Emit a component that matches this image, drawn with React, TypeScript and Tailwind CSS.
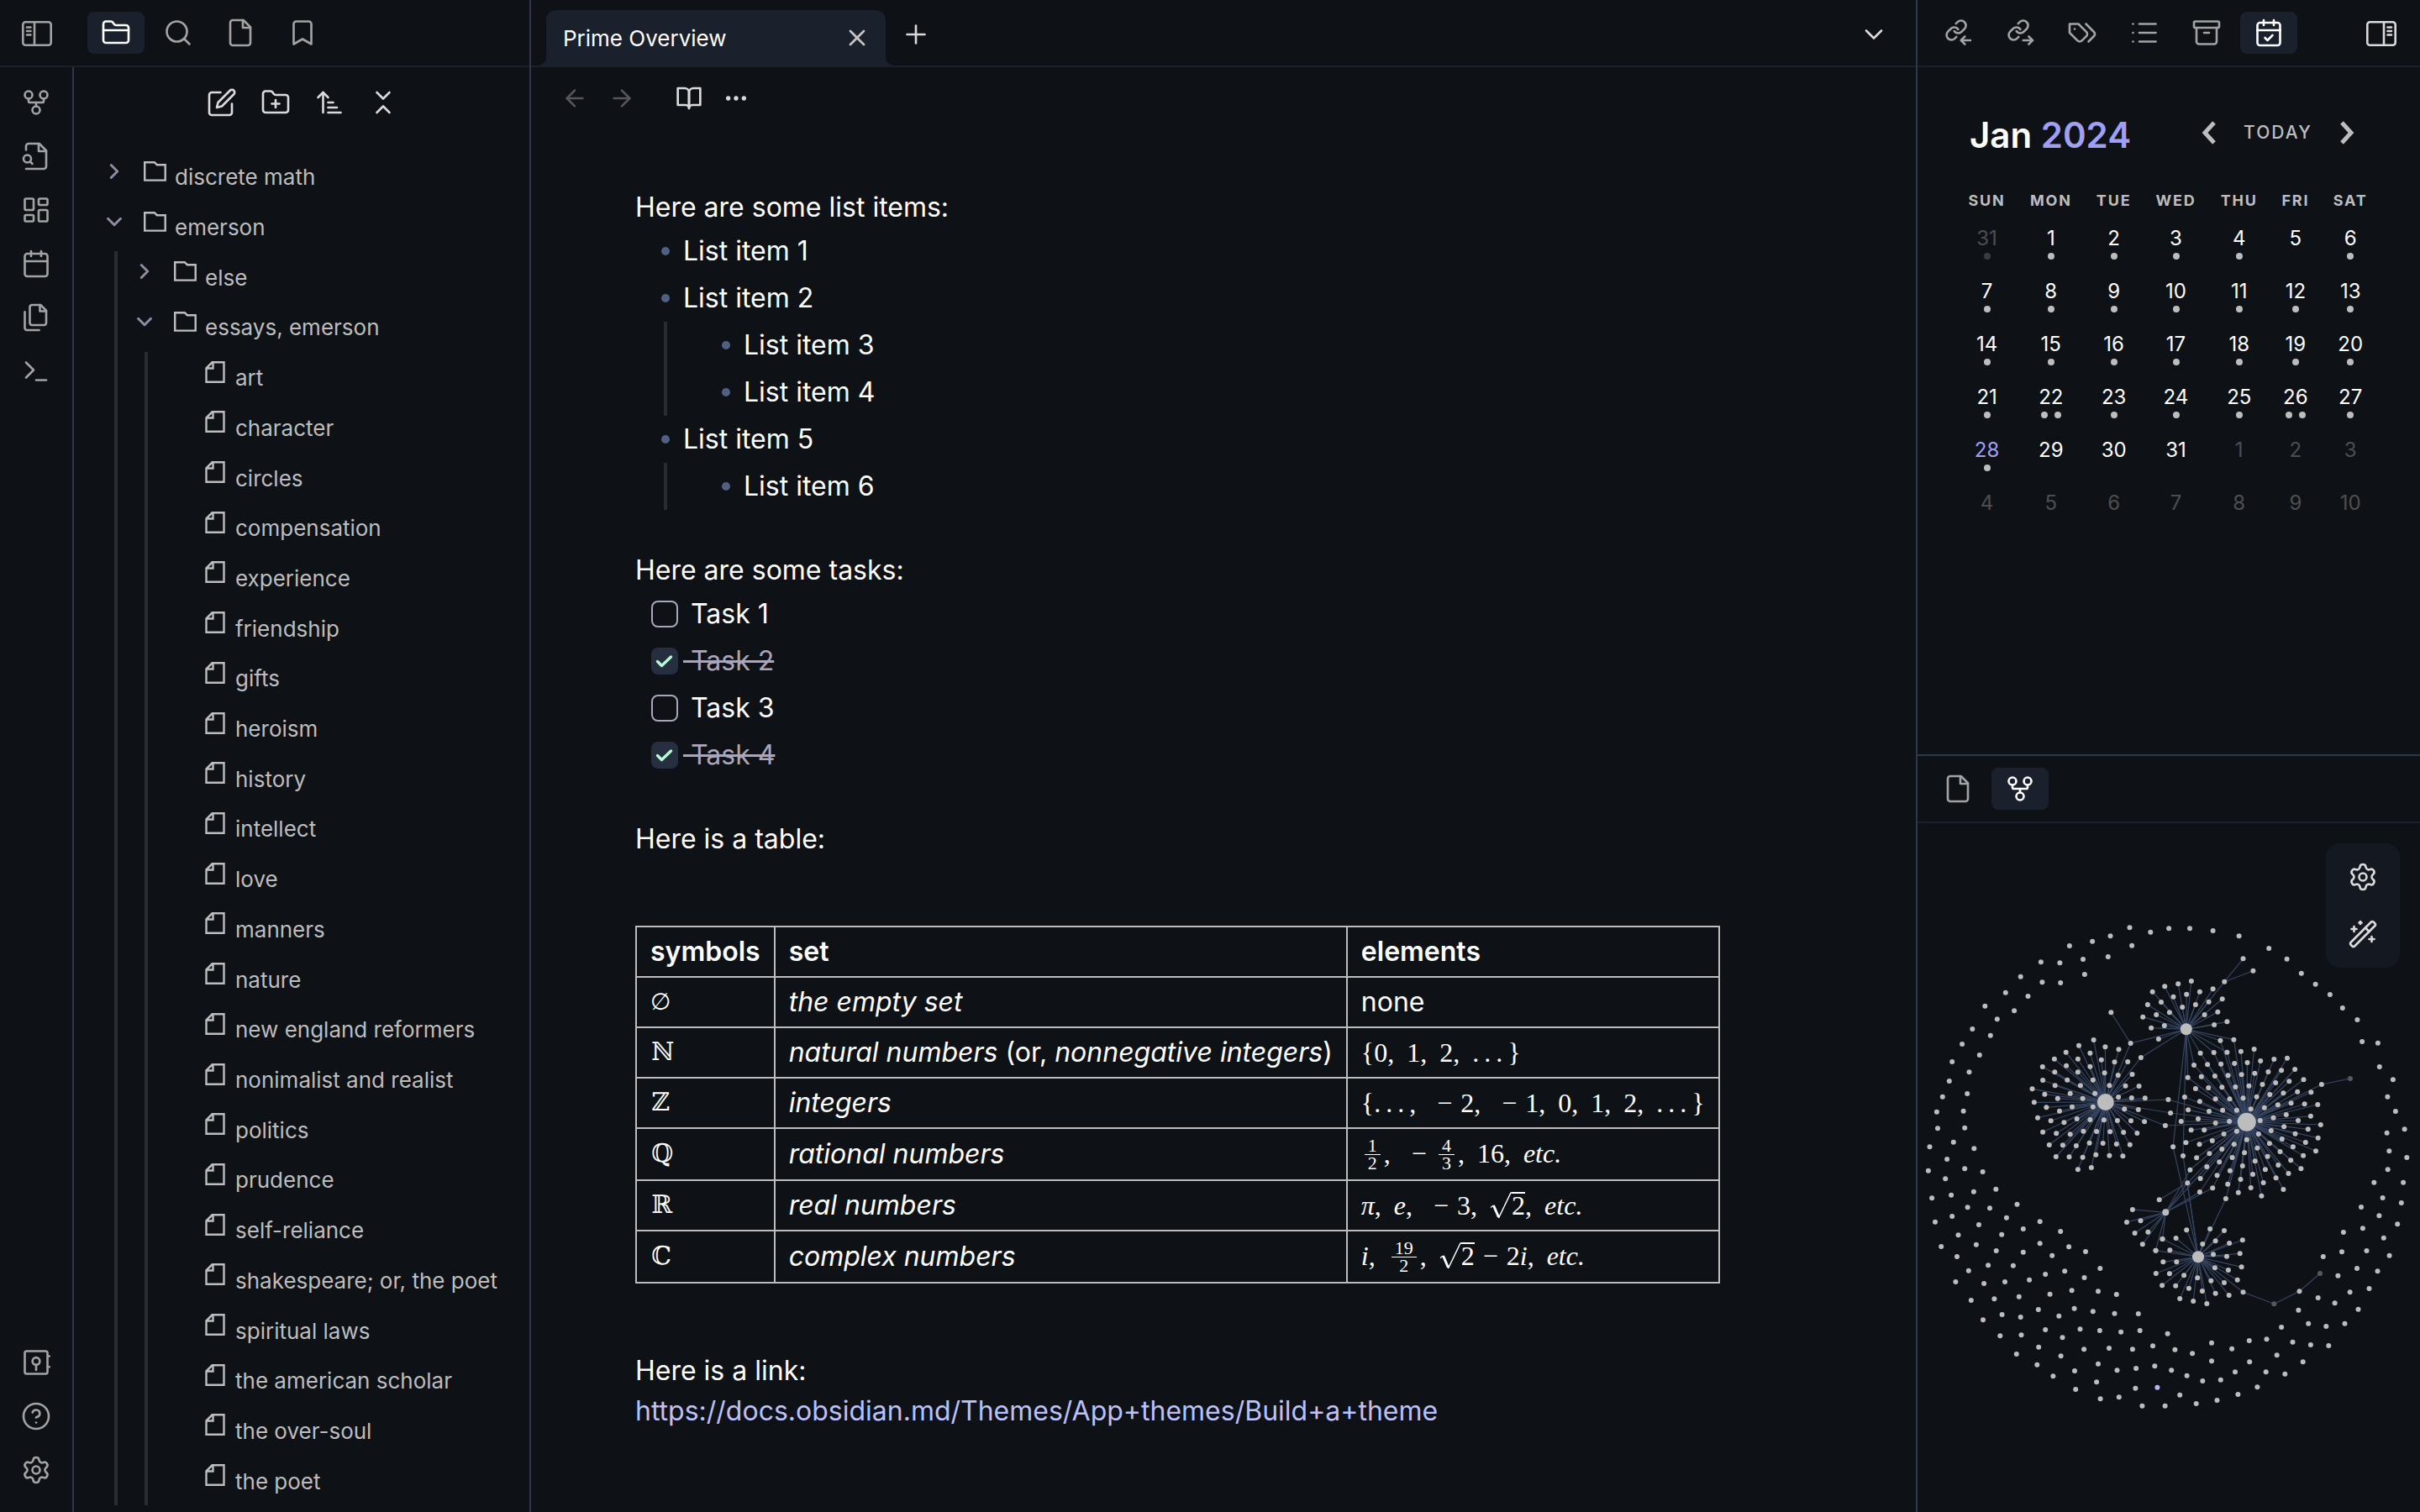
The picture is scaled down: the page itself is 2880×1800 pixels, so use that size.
import React from "react";
import {
  Search,
  Bookmark,
  GitFork,
  LayoutDashboard,
  Calendar,
  CircleHelp,
  Settings,
  FolderPlus,
  ArrowUpNarrowWide,
  ChevronsDownUp,
  ChevronRight,
  ChevronDown,
  X,
  Plus,
  ArrowLeft,
  ArrowRight,
  Ellipsis,
  List,
  CalendarCheck,
  WandSparkles,
} from "lucide-react";

/* ---------- icons ---------- */

function Glyph({ children, className = "size-9", strokeWidth = 1.75 }: { children: React.ReactNode; className?: string; strokeWidth?: number }) {
  return (
    <svg
      viewBox="0 0 24 24"
      fill="none"
      stroke="currentColor"
      strokeWidth={strokeWidth}
      strokeLinecap="round"
      strokeLinejoin="round"
      className={className}
      aria-hidden="true"
    >
      {children}
    </svg>
  );
}

const FolderIcon = () => (
  <Glyph>
    <path d="M4 20h16a2 2 0 0 0 2-2V8a2 2 0 0 0-2-2h-7.93a2 2 0 0 1-1.66-.9l-.82-1.2A2 2 0 0 0 7.93 3H4a2 2 0 0 0-2 2v13c0 1.1.9 2 2 2Z" />
    <path d="M2 10h20" />
  </Glyph>
);
const FileIcon = () => (
  <Glyph>
    <path d="M14.5 2H6a2 2 0 0 0-2 2v16a2 2 0 0 0 2 2h12a2 2 0 0 0 2-2V7.5L14.5 2z" />
    <path d="M14 2v6h6" />
  </Glyph>
);
const FileSearchIcon = () => (
  <Glyph>
    <path d="M4 22h14a2 2 0 0 0 2-2V7.5L14.5 2H6a2 2 0 0 0-2 2v3" />
    <path d="M14 2v6h6" />
    <circle cx="5" cy="14" r="3" />
    <path d="m9 18-1.5-1.5" />
  </Glyph>
);
const FilesIcon = () => (
  <Glyph>
    <path d="M15.5 2H8.6c-.4 0-.8.2-1.1.5-.3.3-.5.7-.5 1.1v12.8c0 .4.2.8.5 1.1.3.3.7.5 1.1.5h9.8c.4 0 .8-.2 1.1-.5.3-.3.5-.7.5-1.1V6.5L15.5 2z" />
    <path d="M3 7.6v12.8c0 .4.2.8.5 1.1.3.3.7.5 1.1.5h9.8" />
    <path d="M15 2v5h5" />
  </Glyph>
);
const TerminalIcon = () => (
  <Glyph>
    <path d="m4 17 6-6-6-6" />
    <path d="M12 19h8" />
  </Glyph>
);
const VaultIcon = () => (
  <Glyph>
    <rect x="3" y="3" width="18" height="18" rx="1.5" />
    <circle cx="12" cy="11" r="2.9" />
    <path d="M12 14v4M21.6 7h.9M21.6 15.5h.9" />
  </Glyph>
);
const EditIcon = () => (
  <Glyph>
    <path d="M11 4H4a2 2 0 0 0-2 2v14a2 2 0 0 0 2 2h14a2 2 0 0 0 2-2v-7" />
    <path d="M18.5 2.5a2.12 2.12 0 0 1 3 3L12 15l-4 1 1-4Z" />
  </Glyph>
);
const BookIcon = () => (
  <Glyph className="size-8" strokeWidth={2}>
    <path d="M2 3h6a4 4 0 0 1 4 4v14a3 3 0 0 0-3-3H2z" />
    <path d="M22 3h-6a4 4 0 0 0-4 4v14a3 3 0 0 1 3-3h7z" />
  </Glyph>
);
const TagsIcon = () => (
  <Glyph>
    <path d="M9 5H2v7l6.29 6.29c.94.94 2.48.94 3.42 0l3.58-3.58c.94-.94.94-2.48 0-3.42L9 5Z" />
    <path d="M6 9.01V9" />
    <path d="m15 5 6.3 6.3a2.4 2.4 0 0 1 0 3.4L17 19" />
  </Glyph>
);
const ArchiveIcon = () => (
  <Glyph>
    <rect x="2" y="3" width="20" height="5" rx="1" />
    <path d="M4 8v11a2 2 0 0 0 2 2h12a2 2 0 0 0 2-2V8" />
    <path d="M10 12h4" />
  </Glyph>
);
const LinkIcon = ({ incoming = false }: { incoming?: boolean }) => (
  <Glyph>
    <g transform="translate(1.46 0.76) scale(0.77)" strokeWidth="2.27">
      <path d="M10 13a5 5 0 0 0 7.54.54l3-3a5 5 0 0 0-7.07-7.07l-1.72 1.71" />
      <path d="M14 11a5 5 0 0 0-7.54-.54l-3 3a5 5 0 0 0 7.07 7.07l1.71-1.71" />
    </g>
    {incoming ? <path d="M22 18h-7.5M17.6 14.9 14.5 18l3.1 3.1" /> : <path d="M14.5 18H22M18.9 14.9 22 18l-3.1 3.1" />}
  </Glyph>
);
const PanelIcon = ({ side }: { side: "left" | "right" }) => (
  <svg viewBox="0 0 36 30" fill="none" stroke="currentColor" strokeWidth="2.6" strokeLinecap="round" className="h-[30px] w-9" aria-hidden="true">
    <rect x="1.3" y="1.3" width="33.4" height="27.4" rx="3" />
    {side === "left" ? <path d="M15 1.5v27M6 7.5h4.5M6 12h4.5M6 16.5h4.5" /> : <path d="M21 1.5v27M25.5 7.5H30M25.5 12H30M25.5 16.5H30" />}
  </svg>
);
const TreeFolder = () => (
  <svg viewBox="0 0 28 24" fill="none" stroke="currentColor" strokeWidth="2.4" className="h-6 w-7" aria-hidden="true">
    <path d="M1.2 1.2h11.6l3 3h9.9v18.4H1.2z" />
  </svg>
);
const TreeFile = () => (
  <svg viewBox="0 0 28 26" fill="none" stroke="currentColor" strokeWidth="2.4" className="h-[26px] w-7" aria-hidden="true">
    <path d="M9.5 1.3h14v23.4h-21V8.300zM10.5 1.300v7.200h-8" />
  </svg>
);

/* ---------- shared controls ---------- */

function TabButton({ label, active = false, children }: { label: string; active?: boolean; children: React.ReactNode }) {
  return (
    <button
      type="button"
      aria-label={label}
      className={
        active
          ? "flex h-[50px] w-[68px] items-center justify-center rounded-lg bg-[#1a202c] text-white"
          : "flex h-[50px] w-[68px] items-center justify-center rounded-lg text-[#a3a3a3]"
      }
    >
      {children}
    </button>
  );
}

function IconButton({ label, className = "", children }: { label: string; className?: string; children: React.ReactNode }) {
  return (
    <button type="button" aria-label={label} className={`flex items-center justify-center ${className}`}>
      {children}
    </button>
  );
}

/* ---------- left side ---------- */

const essays = [
  "art",
  "character",
  "circles",
  "compensation",
  "experience",
  "friendship",
  "gifts",
  "heroism",
  "history",
  "intellect",
  "love",
  "manners",
  "nature",
  "new england reformers",
  "nonimalist and realist",
  "politics",
  "prudence",
  "self-reliance",
  "shakespeare; or, the poet",
  "spiritual laws",
  "the american scholar",
  "the over-soul",
  "the poet",
];

function FolderRow({ name, open = false }: { name: string; open?: boolean }) {
  return (
    <button type="button" aria-expanded={open} className="flex w-full flex-1 items-center text-left">
      <span className="mb-3 flex w-9 justify-center text-[#8f8ba0]">
        {open ? <ChevronDown className="size-[30px]" strokeWidth={2.4} /> : <ChevronRight className="size-[30px]" strokeWidth={2.4} />}
      </span>
      <span className="mb-3 ml-[17px] mr-[9px]">
        <TreeFolder />
      </span>
      <span className="pt-0.5">{name}</span>
    </button>
  );
}

const branch = "ml-[18px] flex flex-col border-l-4 border-[#2a2c31] pl-[14px]";

function FileTree() {
  return (
    <ul className="flex min-h-0 flex-1 flex-col pb-2 pl-[30px] text-[26px] text-[#bdbdbd]">
      <li className="flex flex-1">
        <FolderRow name="discrete math" />
      </li>
      <li className="flex flex-[26] flex-col">
        <FolderRow name="emerson" open />
        <ul className={`${branch} flex-[25]`}>
          <li className="flex flex-1">
            <FolderRow name="else" />
          </li>
          <li className="flex flex-[24] flex-col">
            <FolderRow name="essays, emerson" open />
            <ul className={`${branch} flex-[23]`}>
              {essays.map((name) => (
                <li key={name} className="flex flex-1">
                  <button type="button" className="flex w-full items-center whitespace-nowrap pl-[53px] text-left">
                    <span className="mb-3 mr-[9px]">
                      <TreeFile />
                    </span>
                    <span className="pt-0.5">{name}</span>
                  </button>
                </li>
              ))}
            </ul>
          </li>
        </ul>
      </li>
    </ul>
  );
}

function LeftSide() {
  return (
    <aside className="flex w-[632px] shrink-0 flex-col border-r-2 border-[#2d3748]">
      <div className="flex h-20 shrink-0 items-start gap-1.5 border-b-2 border-[#1a202c] pt-3.5">
        <IconButton label="Toggle left sidebar" className="ml-[26px] mr-9 h-[52px] text-[#a3a3a3]">
          <PanelIcon side="left" />
        </IconButton>
        <TabButton label="Files" active>
          <FolderIcon />
        </TabButton>
        <TabButton label="Search">
          <Search className="size-9" strokeWidth={1.75} />
        </TabButton>
        <TabButton label="File">
          <FileIcon />
        </TabButton>
        <TabButton label="Bookmarks">
          <Bookmark className="size-9" strokeWidth={1.75} />
        </TabButton>
      </div>
      <div className="flex min-h-0 flex-1">
        <nav aria-label="Ribbon" className="flex w-[88px] shrink-0 flex-col items-center gap-7 border-r-2 border-[#2d3748] pb-8 pt-6 text-[#a3a3a3]">
          <IconButton label="Open graph view">
            <GitFork className="size-9" strokeWidth={1.75} />
          </IconButton>
          <IconButton label="Open quick switcher">
            <FileSearchIcon />
          </IconButton>
          <IconButton label="Create new canvas">
            <LayoutDashboard className="size-9" strokeWidth={1.75} />
          </IconButton>
          <IconButton label="Open daily note">
            <Calendar className="size-9" strokeWidth={1.75} />
          </IconButton>
          <IconButton label="Insert template">
            <FilesIcon />
          </IconButton>
          <IconButton label="Open command palette">
            <TerminalIcon />
          </IconButton>
          <IconButton label="Open another vault" className="mt-auto">
            <VaultIcon />
          </IconButton>
          <IconButton label="Help">
            <CircleHelp className="size-9" strokeWidth={1.75} />
          </IconButton>
          <IconButton label="Settings">
            <Settings className="size-9" strokeWidth={1.75} />
          </IconButton>
        </nav>
        <div className="flex min-w-0 flex-1 flex-col">
          <div className="flex h-[100px] shrink-0 items-start justify-center gap-7 pl-0.5 pt-6 text-[#dadada]">
            <IconButton label="New note">
              <EditIcon />
            </IconButton>
            <IconButton label="New folder">
              <FolderPlus className="size-9" strokeWidth={1.75} />
            </IconButton>
            <IconButton label="Change sort order">
              <ArrowUpNarrowWide className="size-9" strokeWidth={1.75} />
            </IconButton>
            <IconButton label="Collapse all">
              <ChevronsDownUp className="size-9" strokeWidth={1.75} />
            </IconButton>
          </div>
          <FileTree />
        </div>
      </div>
    </aside>
  );
}

/* ---------- math ---------- */

function Maths({ children }: { children: React.ReactNode }) {
  return <span className="whitespace-nowrap font-['Liberation_Serif',serif]">{children}</span>;
}
const Comma = () => <span className="mr-[15px]">,</span>;
const Minus = () => <span className="mx-2.5">−</span>;
const Dots = () => (
  <span className="mr-1.5 inline-flex gap-1.5">
    <span>.</span>
    <span>.</span>
    <span>.</span>
  </span>
);
function Frac({ top, bottom }: { top: string; bottom: string }) {
  return (
    <span className="mx-1 mb-1 inline-flex flex-col items-center align-middle text-[22px] leading-5">
      <span className="border-b border-white px-1">{top}</span>
      <span>{bottom}</span>
    </span>
  );
}
function Root({ children }: { children: React.ReactNode }) {
  return (
    <span className="inline-block">
      <svg viewBox="0 0 26 32" fill="none" stroke="currentColor" className="inline h-8 w-[26px] align-[-5px]" role="img" aria-label="square root of">
        <path d="M1 18.5 4.5 16" strokeWidth="1.5" />
        <path d="M4.5 16 10.5 30" strokeWidth="3" />
        <path d="M10.5 31 25 1h1" strokeWidth="1.5" />
      </svg>
      <span className="inline-block border-t-2 border-white leading-7">{children}</span>
    </span>
  );
}

/* ---------- editor ---------- */

function Bullet({ children }: { children: React.ReactNode }) {
  return (
    <li className="flex items-center py-1">
      <span className="ml-[31px] mr-4 size-2.5 rounded-full bg-[#4f6083]" />
      {children}
    </li>
  );
}

function Task({ id, label, done = false }: { id: string; label: string; done?: boolean }) {
  return (
    <li className="flex items-center py-1 pl-[19px]">
      <span className="relative mr-1.5 flex size-8">
        <input
          id={id}
          type="checkbox"
          defaultChecked={done}
          className="peer size-8 appearance-none rounded-lg border-2 border-[#aba5bb] checked:border-[#262f40] checked:bg-[#262f40]"
        />
        <svg
          viewBox="0 0 32 32"
          fill="none"
          stroke="#b0fccb"
          strokeWidth="3.5"
          strokeLinecap="round"
          strokeLinejoin="round"
          className="pointer-events-none absolute inset-0 hidden size-8 peer-checked:block"
          aria-hidden="true"
        >
          <path d="M7.5 16.5 12.5 21.5 23.5 11" />
        </svg>
      </span>
      <label htmlFor={id} className={done ? "whitespace-pre text-[#aba5b8] line-through decoration-[3px]" : "whitespace-pre"}>
        {" " + label}
      </label>
    </li>
  );
}

const rows: { symbol: string; set: React.ReactNode; elements: React.ReactNode }[] = [
  { symbol: "∅", set: <em>the empty set</em>, elements: "none" },
  {
    symbol: "ℕ",
    set: (
      <>
        <em>natural numbers</em> (or, <em>nonnegative integers</em>)
      </>
    ),
    elements: (
      <Maths>
        {"{0"}<Comma />1<Comma />2<Comma /><Dots />{"}"}
      </Maths>
    ),
  },
  {
    symbol: "ℤ",
    set: <em>integers</em>,
    elements: (
      <Maths>
        {"{"}<Dots /><Comma /><Minus />2<Comma /><Minus />1<Comma />0<Comma />1<Comma />2<Comma /><Dots />{"}"}
      </Maths>
    ),
  },
  {
    symbol: "ℚ",
    set: <em>rational numbers</em>,
    elements: (
      <Maths>
        <Frac top="1" bottom="2" /><Comma /><Minus /><Frac top="4" bottom="3" /><Comma />16<Comma /><i>etc.</i>
      </Maths>
    ),
  },
  {
    symbol: "ℝ",
    set: <em>real numbers</em>,
    elements: (
      <Maths>
        <i>π</i><Comma /><i>e</i><Comma /><Minus />3<Comma /><Root>2</Root><Comma /><i>etc.</i>
      </Maths>
    ),
  },
  {
    symbol: "ℂ",
    set: <em>complex numbers</em>,
    elements: (
      <Maths>
        <i>i</i><Comma /><Frac top="19" bottom="2" /><Comma /><Root>2</Root><Minus />2<i>i</i><Comma /><i>etc.</i>
      </Maths>
    ),
  },
];

const cell = "border-2 border-[#bdbdbd] px-4 py-[5px] text-left";

function Editor() {
  return (
    <main className="flex min-w-0 flex-1 flex-col">
      <div className="flex h-20 shrink-0 items-end border-b-2 border-[#1a202c] pl-[18px]">
        <div className="relative flex h-[66px] w-[404px] items-center justify-between rounded-t-xl bg-[#1a202c] pl-5 pr-[18px]">
          <svg viewBox="0 0 10 10" className="absolute -left-2.5 bottom-0 size-2.5 fill-[#1a202c]" aria-hidden="true">
            <path d="M10 0v10H0A10 10 0 0 0 10 0z" />
          </svg>
          <svg viewBox="0 0 10 10" className="absolute -right-2.5 bottom-0 size-2.5 fill-[#1a202c]" aria-hidden="true">
            <path d="M0 0v10h10A10 10 0 0 1 0 0z" />
          </svg>
          <span className="text-[26px] text-white">Prime Overview</span>
          <IconButton label="Close tab" className="text-[#c4c4c4]">
            <X className="size-8" strokeWidth={2} />
          </IconButton>
        </div>
        <div className="flex h-[74px] flex-1 items-center justify-between pl-[18px] pr-8 text-[#dadada]">
          <IconButton label="New tab">
            <Plus className="size-9" strokeWidth={1.75} />
          </IconButton>
          <IconButton label="Tab list">
            <ChevronDown className="size-9" strokeWidth={1.75} />
          </IconButton>
        </div>
      </div>

      <div className="flex shrink-0 items-center gap-6 pl-9 pt-[21px]">
        <IconButton label="Navigate back" className="text-[#565659]">
          <ArrowLeft className="size-8" strokeWidth={2} />
        </IconButton>
        <IconButton label="Navigate forward" className="mr-6 text-[#565659]">
          <ArrowRight className="size-8" strokeWidth={2} />
        </IconButton>
        <IconButton label="Reading view" className="text-[#dadada]">
          <BookIcon />
        </IconButton>
        <IconButton label="More options" className="text-[#dadada]">
          <Ellipsis className="size-8" strokeWidth={2} />
        </IconButton>
      </div>

      <article className="min-h-0 flex-1 px-[124px] pt-[90px] text-[32px] leading-[48px] text-white">
        <p>Here are some list items:</p>
        <ul>
          <Bullet>List item 1</Bullet>
          <Bullet>List item 2</Bullet>
          <li className="ml-[34px] border-l-4 border-[#2a2c31] pl-[34px]">
            <ul>
              <Bullet>List item 3</Bullet>
              <Bullet>List item 4</Bullet>
            </ul>
          </li>
          <Bullet>List item 5</Bullet>
          <li className="ml-[34px] border-l-4 border-[#2a2c31] pl-[34px]">
            <ul>
              <Bullet>List item 6</Bullet>
            </ul>
          </li>
        </ul>
        <p className="mt-12">Here are some tasks:</p>
        <ul>
          <Task id="task-1" label="Task 1" />
          <Task id="task-2" label="Task 2" done />
          <Task id="task-3" label="Task 3" />
          <Task id="task-4" label="Task 4" done />
        </ul>
        <p className="mt-12">Here is a table:</p>
        <table className="mb-20 mt-[79px] border-collapse">
          <thead>
            <tr>
              <th className={`${cell} font-semibold`}>symbols</th>
              <th className={`${cell} font-semibold`}>set</th>
              <th className={`${cell} font-semibold`}>elements</th>
            </tr>
          </thead>
          <tbody>
            {rows.map((row) => (
              <tr key={row.symbol}>
                <td
                  className={
                    row.symbol === "∅"
                      ? `${cell} font-['DejaVu_Sans',sans-serif] text-[28px]`
                      : `${cell} font-['DejaVu_Math_TeX_Gyre','DejaVu_Serif',serif] text-[30px]`
                  }
                >
                  {row.symbol}
                </td>
                <td className={cell}>{row.set}</td>
                <td className={cell}>{row.elements}</td>
              </tr>
            ))}
          </tbody>
        </table>
        <p>Here is a link:</p>
        <p>
          <a href="https://docs.obsidian.md/Themes/App+themes/Build+a+theme" className="text-[#bcc0fb]">
            https://docs.obsidian.md/Themes/App+themes/Build+a+theme
          </a>
        </p>
      </article>
    </main>
  );
}

/* ---------- calendar ---------- */

const weekdays = ["SUN", "MON", "TUE", "WED", "THU", "FRI", "SAT"];
const weeks = [
  [31, 1, 2, 3, 4, 5, 6],
  [7, 8, 9, 10, 11, 12, 13],
  [14, 15, 16, 17, 18, 19, 20],
  [21, 22, 23, 24, 25, 26, 27],
  [28, 29, 30, 31, 1, 2, 3],
  [4, 5, 6, 7, 8, 9, 10],
];

function dotsFor(week: number, day: number) {
  if (week === 5 || (week === 4 && day !== 28) || (week === 0 && day === 5)) return 0;
  return day === 22 || day === 26 ? 2 : 1;
}

function CalendarPanel() {
  return (
    <section aria-label="Calendar" className="flex flex-1 flex-col pl-[46px] pr-12 pt-[52px]">
      <div className="flex h-14 items-center pl-4 pr-[30px]">
        <h2 className="mr-auto text-[42px] font-semibold text-white">
          Jan <span className="text-[#9f9ff5]">2024</span>
        </h2>
        <div className="mb-1 flex items-center gap-8 text-[#bdbdbd]">
          <IconButton label="Previous month">
            <svg viewBox="0 0 18 28" fill="none" stroke="currentColor" strokeWidth="5" className="h-7 w-[18px]" aria-hidden="true">
              <path d="M15 2 4 14l11 12" />
            </svg>
          </IconButton>
          <button type="button" className="text-[21px] font-medium tracking-widest">
            TODAY
          </button>
          <IconButton label="Next month">
            <svg viewBox="0 0 18 28" fill="none" stroke="currentColor" strokeWidth="5" className="h-7 w-[18px]" aria-hidden="true">
              <path d="m3 2 11 12L3 26" />
            </svg>
          </IconButton>
        </div>
      </div>
      <table className="mt-9 w-full">
        <thead>
          <tr>
            {weekdays.map((day) => (
              <th key={day} className="h-[30px] px-3 text-lg font-bold tracking-widest text-[#bdbdbd]">
                {day}
              </th>
            ))}
          </tr>
        </thead>
        <tbody>
          {weeks.map((week, w) => (
            <tr key={w}>
              {week.map((day, d) => {
                const outside = (w === 0 && day > 7) || (w >= 4 && day < 15);
                const today = w === 4 && day === 28;
                return (
                  <td key={d} className="h-[63px] p-0 align-top">
                    <button
                      type="button"
                      className={
                        outside
                          ? "flex w-full flex-col items-center pt-4 text-2xl leading-7 text-white opacity-25"
                          : today
                            ? "flex w-full flex-col items-center pt-4 text-2xl leading-7 text-[#9f9ff5]"
                            : "flex w-full flex-col items-center pt-4 text-2xl leading-7 text-white"
                      }
                    >
                      {day}
                      <span className="mt-[3px] flex gap-2">
                        {Array.from({ length: dotsFor(w, day) }, (_, i) => (
                          <span key={i} className="size-2 rounded-full bg-[#bdbdbd]" />
                        ))}
                      </span>
                    </button>
                  </td>
                );
              })}
            </tr>
          ))}
        </tbody>
      </table>
    </section>
  );
}

/* ---------- graph ---------- */

type Point = [number, number];

function pairs(list: string, dy = 0): Point[] {
  return list.split(" ").map((pair) => {
    const [x, y] = pair.split(",").map(Number);
    return [x, y + dy];
  });
}

const LOWER = 1080;

const orphans: Point[] = [
  ...pairs(
    "665,373 730,389 787,376 852,376 924,384 1005,403 605,403 549,422 478,438 672,437 598,477 520,486 525,540 448,499 389,496 450,570 393,568 326,548 279,605 349,618 306,670 215,653 253,700 232,758 176,735 144,789 198,828 113,852 166,889 104,921 160,966 83,977 148,1028 65,1031 1098,447 1154,485 1199,536 1243,575 1288,612 1327,660 1373,702 1388,780 1437,785 1442,870 1484,916 1467,977 1492,1029",
  ),
  ...pairs(
    "68,10 152,8 1465,26 1520,13 117,59 43,76 181,82 97,120 39,161 152,154 208,165 92,190 249,227 180,236 110,248 50,259 315,281 161,292 230,295 113,324 282,329 60,344 196,354 386,343 334,369 450,378 132,391 267,389 188,425 386,421 79,432 250,447 334,452 476,433 424,464 528,450 128,468 225,499 303,500 573,510 164,518 463,520 403,531 524,543 124,558 212,564 277,558 353,551 485,589 567,592 624,603 417,602 172,624 244,619 321,611 493,653 381,657 551,664 618,671 692,672 268,675 326,684 445,680 209,694 403,729 511,727 572,732 638,737 697,732 783,743 262,751 328,748 456,757 382,791 523,799 601,795 674,799 737,787 806,800 860,814 313,816 451,823 377,854 567,851 743,859 685,867 494,876 626,874 795,874 427,895 843,893 892,912 562,916 497,942 683,938 821,962 574,976 632,970 704,1001 775,1001 872,993 937,981 1002,960 1062,934 948,908 993,880 1089,880 1148,887 920,841 1038,844 1204,844 920,776 983,797 1037,768 1091,763 1123,820 1172,773 1228,783 1284,786 1137,720 1221,707 1276,717 1334,707 1190,659 1303,634 1376,656 1251,615 1350,595 1410,582 1313,536 1436,520 1372,510 1267,468 1325,451 1402,447 1473,464 1455,401 1330,381 1390,367 1498,352 1441,322 1385,291 1510,276 1452,258 1425,203 1516,203 1468,157 1472,91 1527,114",
    LOWER,
  ),
];

const north: Point = [841, 736];
const west: Point = [590, 996];
const east: Point = [1029, 1067];
const small: Point = [777, 310 + LOWER];
const south: Point = [878, 469 + LOWER];

const clusters: { hub: Point; r: number; leaves: Point[] }[] = [
  {
    hub: north,
    r: 7,
    leaves: pairs(
      "857,564 816,574 774,583 736,602 883,602 842,611 924,592 801,620 953,628 911,638 763,639 721,648 870,648 829,657 939,674 789,676 898,684 748,684 706,692 968,709 773,723 928,720 732,731 755,771 947,776 989,773 668,786 700,837 960,566",
    ),
  },
  {
    hub: west,
    r: 10,
    leaves: [
      ...pairs(
        "553,774 507,794 589,799 631,808 467,818 542,821 431,842 504,842 577,845 618,853 659,852 394,870 468,866 542,869 587,892 629,900 673,897 432,889 504,889 395,918 471,917 551,917 512,937 433,937 602,937 652,938 694,939 362,949 480,965 557,965 401,968 441,983 519,983 630,978 671,981 713,982 368,997 406,1015 486,1013 551,1013 649,1021 692,1023 447,1028 379,1052 501,1056 542,1059 585,1060 420,1063 627,1062 669,1063 711,1066 461,1069 785,987 792,1035 776,1080",
      ),
      ...pairs(
        "395,23 437,28 480,31 521,20 562,21 604,22 646,24 688,27 415,69 457,70 499,72 540,62 582,63 624,66 666,68 436,111 477,112 519,113 560,104 602,107 644,109 504,157 546,150",
        LOWER,
      ),
    ],
  },
  {
    hub: east,
    r: 11,
    leaves: [
      ...pairs(
        "885,821 927,819 968,818 1011,815 1052,807 1155,839 1114,843 1072,849 1031,855 991,858 949,860 907,862 865,864 1179,879 1137,883 1096,888 1054,893 1013,898 971,901 930,903 888,905 846,908 1206,916 1161,922 1119,927 1078,933 1036,938 994,942 952,943 910,945 870,948 1262,933 1229,961 1187,959 1143,964 1101,969 1060,977 1018,982 976,985 932,985 883,994 836,978 1250,1005 1209,1003 1167,1000 1126,1006 1084,1016 1042,1021 998,1025 954,1025 912,1029 847,1024 1228,1046 1189,1062 1152,1041 1112,1052 1071,1062 975,1065 878,1056 825,1065 932,1071 1259,1077",
      ),
      ...pairs(
        "856,16 897,16 958,30 998,20 1066,30 1105,18 1145,4 1180,29 1220,13 1251,44 840,61 882,67 922,54 1029,50 990,67 1100,64 1139,48 1173,76 1212,60 1244,91 952,84 1062,80 913,100 1022,97 1133,93 1205,107 873,115 984,114 1094,110 1166,124 944,130 1055,127 1127,141 1198,154 905,147 1016,144 1087,157 853,158 977,161 1159,171 937,178 1048,174 1120,187 885,189 1010,192 1081,204 845,205 970,209 1042,222 1143,228 923,223 883,237 1003,239 964,261 1075,251",
        LOWER,
      ),
    ],
  },
  { hub: small, r: 4, leaves: pairs("674,300 656,345 699,340 681,384 722,380 705,424 767,405 746,446", LOWER) },
  {
    hub: south,
    r: 7,
    leaves: pairs(
      "842,373 915,369 959,375 767,405 809,402 892,423 932,412 975,420 1016,409 746,446 790,445 925,460 967,467 1008,457 769,487 811,487 930,508 972,516 1013,505 747,528 789,529 834,535 876,544 918,554 959,561 1000,551 766,571 808,572 849,581 891,591 932,599 974,606 821,618 863,627 905,636 1018,595 800,76 831,108",
      LOWER,
    ),
  },
];

const extraNodes: Point[] = [[1018, 484], [1049, 527], [607, 676], [757, 265 + LOWER], [1193, 592 + LOWER]];
const faintNodes: Point[] = [[1351, 912], [1114, 637 + LOWER], [1257, 528 + LOWER]];

const extraLinks: [Point, Point][] = [
  [[960, 566], [1018, 484]],
  [[960, 566], [1049, 527]],
  [[668, 786], [607, 676]],
  [[668, 786], west],
  [[700, 837], west],
  [[785, 987], east],
  [[792, 1035], east],
  [[776, 1080], east],
  [[1262, 933], [1351, 912]],
  [north, [800, 76 + LOWER]],
  [north, [831, 108 + LOWER]],
  [north, [846, 908]],
  [north, [865, 864]],
  [north, [885, 821]],
  [north, [927, 819]],
  [north, [968, 818]],
  [[947, 776], east],
  [[989, 773], east],
  [[757, 265 + LOWER], [845, 205 + LOWER]],
  [small, [845, 205 + LOWER]],
  [small, [883, 237 + LOWER]],
  [small, [923, 223 + LOWER]],
  [small, [853, 158 + LOWER]],
  [small, [905, 147 + LOWER]],
  [south, [964, 261 + LOWER]],
  [south, [845, 205 + LOWER]],
  [[1018, 595 + LOWER], [1114, 637 + LOWER]],
  [[1114, 637 + LOWER], [1193, 592 + LOWER]],
  [[1193, 592 + LOWER], [1257, 528 + LOWER]],
];

const links: [Point, Point][] = [
  ...clusters.flatMap(({ hub, leaves }) => leaves.map((leaf): [Point, Point] => [hub, leaf])),
  ...extraLinks,
];
const nodes: Point[] = [...orphans, ...clusters.flatMap((cluster) => cluster.leaves), ...extraNodes];

const sx = (x: number) => Math.round((x * 6000) / 1568) / 10;
const sy = (y: number) => Math.round((y * 10) / 3) / 10;

function Graph() {
  return (
    <svg viewBox="0 0 600 820" preserveAspectRatio="xMidYMin meet" className="-ml-0.5 block w-[600px]" role="img" aria-label="Graph of linked notes">
      <g stroke="#364561" strokeWidth="1.2">
        {links.map(([a, b], i) => (
          <line key={i} x1={sx(a[0])} y1={sy(a[1])} x2={sx(b[0])} y2={sy(b[1])} />
        ))}
      </g>
      <g fill="#bdbdbd">
        {nodes.map(([x, y], i) => (
          <circle key={i} cx={sx(x)} cy={sy(y)} r="3" />
        ))}
        {clusters.map(({ hub, r }, i) => (
          <circle key={i} cx={sx(hub[0])} cy={sy(hub[1])} r={r} />
        ))}
      </g>
      <g fill="#57575f">
        {faintNodes.map(([x, y], i) => (
          <circle key={i} cx={sx(x)} cy={sy(y)} r="3" />
        ))}
      </g>
      <circle cx={sx(751)} cy={sy(935 + LOWER)} r="3" fill="#b5b5fb" />
    </svg>
  );
}

/* ---------- right side ---------- */

function RightSide() {
  return (
    <aside className="flex w-[600px] shrink-0 flex-col border-l-2 border-[#2d3748]">
      <div className="flex flex-1 flex-col border-b-2 border-[#2d3748]">
        <div className="flex h-20 shrink-0 items-start gap-1.5 border-b-2 border-[#1a202c] pl-3.5 pr-7 pt-3.5">
          <TabButton label="Backlinks">
            <LinkIcon incoming />
          </TabButton>
          <TabButton label="Outgoing links">
            <LinkIcon />
          </TabButton>
          <TabButton label="Tags">
            <TagsIcon />
          </TabButton>
          <TabButton label="Outline">
            <List className="size-9" strokeWidth={1.75} />
          </TabButton>
          <TabButton label="Archive">
            <ArchiveIcon />
          </TabButton>
          <TabButton label="Calendar" active>
            <CalendarCheck className="size-9" strokeWidth={1.75} />
          </TabButton>
          <IconButton label="Toggle right sidebar" className="ml-auto h-[52px] text-[#dadada]">
            <PanelIcon side="right" />
          </IconButton>
        </div>
        <CalendarPanel />
      </div>
      <div className="flex flex-1 flex-col">
        <div className="flex h-20 shrink-0 items-start gap-1.5 border-b-2 border-[#1a202c] pl-3.5 pt-3.5">
          <TabButton label="File properties">
            <FileIcon />
          </TabButton>
          <TabButton label="Graph" active>
            <GitFork className="size-9" strokeWidth={1.75} />
          </TabButton>
        </div>
        <div className="relative flex-1">
          <Graph />
          <div className="absolute right-6 top-6 flex w-[88px] flex-col items-center gap-8 rounded-2xl bg-[#141820] py-[22px] text-[#dadada]">
            <IconButton label="Graph settings">
              <Settings className="size-9" strokeWidth={1.75} />
            </IconButton>
            <IconButton label="Animate graph">
              <WandSparkles className="size-9" strokeWidth={1.75} />
            </IconButton>
          </div>
        </div>
      </div>
    </aside>
  );
}

export default function App() {
  return (
    <div className="flex h-screen overflow-hidden bg-[#0e1116] font-['Inter',sans-serif]">
      <LeftSide />
      <Editor />
      <RightSide />
    </div>
  );
}
